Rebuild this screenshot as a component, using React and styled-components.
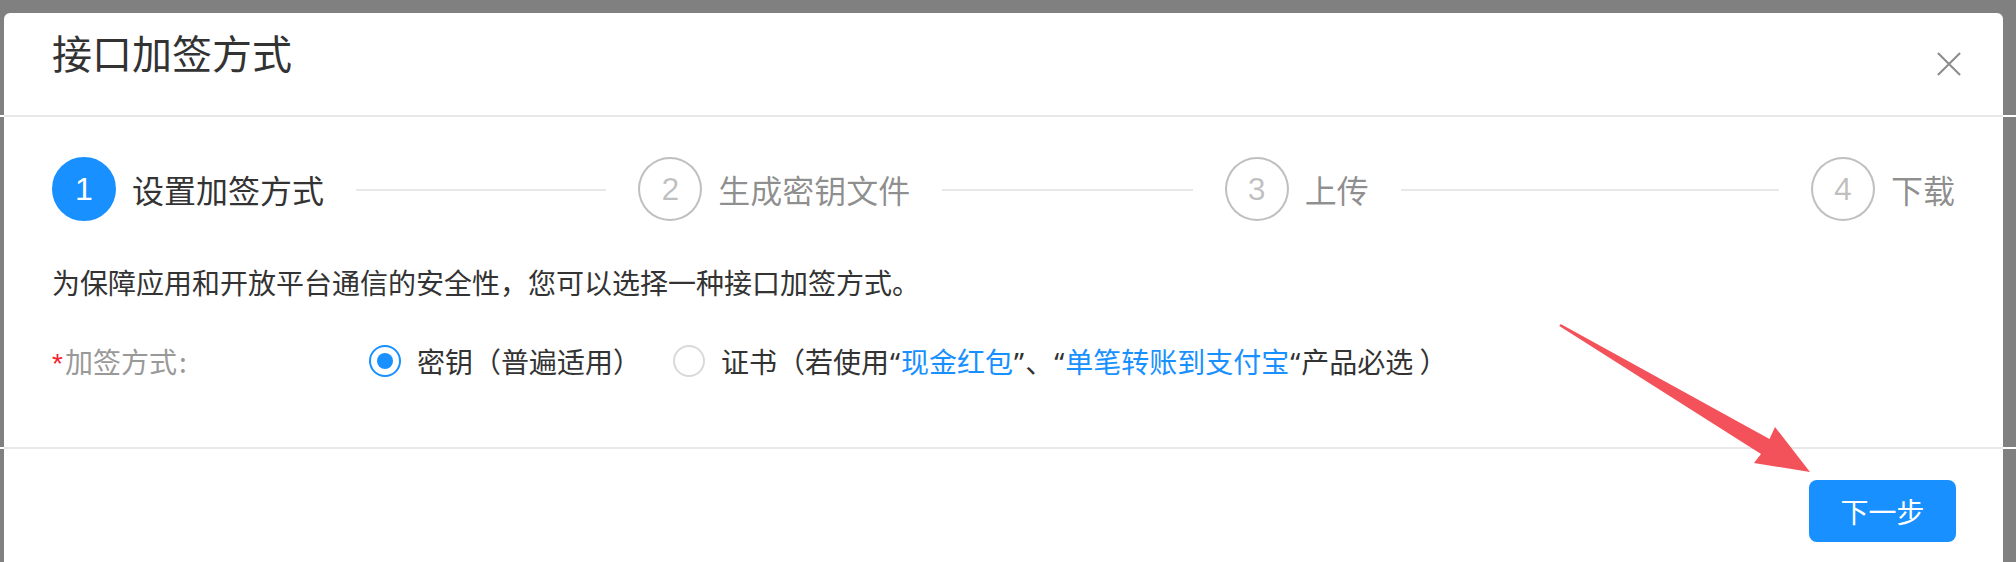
import React from 'react'
import styled, { createGlobalStyle } from 'styled-components'

const GlobalStyle = createGlobalStyle`
  html, body {
    margin: 0;
    padding: 0;
    height: 562px;
    overflow: hidden;
    background: #808080;
  }
  * {
    box-sizing: border-box;
  }
`

const FONT = `'Noto Sans CJK SC', 'Noto Sans', sans-serif`

const steps = [
  { num: 1, title: '设置加签方式' },
  { num: 2, title: '生成密钥文件' },
  { num: 3, title: '上传' },
  { num: 4, title: '下载' },
]

/**
 * Modal asking which signing method the API should use.
 */
const App = () => {
  const current = 1
  return (
    <>
      <GlobalStyle />
      <Page>
        <Modal>
          <Header>
            <Title>接口加签方式</Title>
            <CloseButton aria-label="关闭">
              <svg width="26" height="26" viewBox="0 0 26 26">
                <path d="M1 1 L25 25 M25 1 L1 25" stroke="#8c8c8c" strokeWidth="2.2" fill="none" />
              </svg>
            </CloseButton>
          </Header>
          <Body>
            <Steps>
              {steps.map((s, i) => {
                const last = i === steps.length - 1
                const active = s.num === current
                return (
                  <StepItem key={s.num} $last={last}>
                    <StepIcon $active={active}>{s.num}</StepIcon>
                    <StepTitle $active={active} $last={last}>{s.title}</StepTitle>
                  </StepItem>
                )
              })}
            </Steps>
            <Description>为保障应用和开放平台通信的安全性，您可以选择一种接口加签方式。</Description>
            <FormRow>
              <Label>
                <Required>*</Required>加签方式<Colon>:</Colon>
              </Label>
              <RadioGroup>
                <RadioOption>
                  <RadioCircle $checked>
                    <RadioDot />
                  </RadioCircle>
                  <span>密钥（普遍适用）</span>
                </RadioOption>
                <RadioOption>
                  <RadioCircle />
                  <span>
                    证书（若使用<Quote>“</Quote><Link>现金红包</Link><Quote>”</Quote>、<Quote>“</Quote>
                    <Link>单笔转账到支付宝</Link><Quote>“</Quote>产品必选 ）
                  </span>
                </RadioOption>
              </RadioGroup>
            </FormRow>
          </Body>
          <Footer>
            <PrimaryButton>下一步</PrimaryButton>
          </Footer>
        </Modal>
        <Arrow viewBox="1540 310 290 180" width="290" height="180">
          <polygon
            points="1560.7,323.9 1769.5,439 1775,427 1810,472 1754,463 1761,454 1559.3,326.1"
            fill="#f4525a"
          />
        </Arrow>
      </Page>
    </>
  )
}
export default App

const Page = styled.div`
  position: relative;
  height: 562px;
  overflow: hidden;
  padding: 13px 13px 0 4px;
  font-family: ${FONT};
`
const Modal = styled.div`
  background: #fff;
  border-radius: 6px 6px 0 0;
  min-height: 100%;
`
const Header = styled.div`
  position: relative;
  display: flex;
  justify-content: space-between;
  height: 104px;
  padding: 11px 42px 0 48px;
  border-bottom: 2px solid #e8e8e8;
  &::before,
  &::after {
    content: '';
    position: absolute;
    bottom: -2px;
    height: 2px;
    background: #fff;
  }
  &::before {
    left: -4px;
    width: 4px;
  }
  &::after {
    right: -13px;
    width: 13px;
  }
`
const Title = styled.div`
  font-size: 40px;
  line-height: 56px;
  color: #333;
`
const CloseButton = styled.button`
  align-self: center;
  margin-top: -11px;
  width: 24px;
  height: 24px;
  padding: 0;
  border: none;
  background: transparent;
  display: flex;
  align-items: center;
  justify-content: center;
  cursor: pointer;
`
const Body = styled.div`
  padding: 40px 48px 54px;
`
const Steps = styled.div`
  display: flex;
`
const StepItem = styled.div`
  display: flex;
  align-items: center;
  ${p => (p.$last ? 'flex: none;' : 'flex: 1; margin-right: 32px; overflow: hidden;')}
`
const StepIcon = styled.div`
  flex: none;
  width: 64px;
  height: 64px;
  margin-right: 16px;
  border-radius: 50%;
  display: flex;
  align-items: center;
  justify-content: center;
  font-family: 'Liberation Sans', Arial, sans-serif;
  font-size: 32px;
  border: 2px solid ${p => (p.$active ? '#1890ff' : 'rgba(0, 0, 0, 0.25)')};
  background: ${p => (p.$active ? '#1890ff' : '#fff')};
  color: ${p => (p.$active ? '#fff' : 'rgba(0, 0, 0, 0.25)')};
`
const StepTitle = styled.div`
  position: relative;
  white-space: nowrap;
  font-size: 32px;
  line-height: 64px;
  padding-right: ${p => (p.$last ? '0' : '32px')};
  color: ${p => (p.$active ? '#333' : 'rgba(0, 0, 0, 0.45)')};
  &::after {
    content: '';
    display: ${p => (p.$last ? 'none' : 'block')};
    position: absolute;
    left: 100%;
    top: 50%;
    width: 9999px;
    height: 2px;
    background: #e8e8e8;
  }
`
const Description = styled.div`
  margin-top: 40px;
  font-size: 28px;
  line-height: 42px;
  color: #333;
`
const FormRow = styled.div`
  display: flex;
  align-items: center;
  height: 64px;
  margin-top: 26px;
`
const Label = styled.div`
  flex: none;
  width: 317px;
  font-size: 28px;
  color: #999;
`
const Required = styled.span`
  margin-right: 2px;
  color: #f5222d;
  font-family: 'Liberation Sans', Arial, sans-serif;
`
const Colon = styled.span`
  margin-left: 2px;
`
const RadioGroup = styled.div`
  display: flex;
  align-items: center;
  gap: 32px;
`
const RadioOption = styled.label`
  display: flex;
  align-items: center;
  gap: 16px;
  font-size: 28px;
  color: #333;
  white-space: nowrap;
`
const RadioCircle = styled.span`
  flex: none;
  width: 32px;
  height: 32px;
  border-radius: 50%;
  border: 2px solid ${p => (p.$checked ? '#1890ff' : '#d9d9d9')};
  background: #fff;
  display: flex;
  align-items: center;
  justify-content: center;
`
const RadioDot = styled.span`
  width: 16px;
  height: 16px;
  border-radius: 50%;
  background: #1890ff;
`
const Quote = styled.span`
  font-family: 'Noto Sans', sans-serif;
  margin: 0 1px;
`
const Link = styled.span`
  color: #1890ff;
`
const Footer = styled.div`
  position: relative;
  display: flex;
  justify-content: flex-end;
  padding: 31px 47px 20px;
  border-top: 2px solid #e8e8e8;
  &::before,
  &::after {
    content: '';
    position: absolute;
    top: -2px;
    height: 2px;
    background: #fff;
  }
  &::before {
    left: -4px;
    width: 4px;
  }
  &::after {
    right: -13px;
    width: 13px;
  }
`
const PrimaryButton = styled.button`
  width: 147px;
  height: 62px;
  border: none;
  border-radius: 8px;
  background: #1890ff;
  color: #fff;
  font-family: ${FONT};
  font-size: 28px;
  cursor: pointer;
`
const Arrow = styled.svg`
  position: absolute;
  left: 1540px;
  top: 310px;
  pointer-events: none;
`
